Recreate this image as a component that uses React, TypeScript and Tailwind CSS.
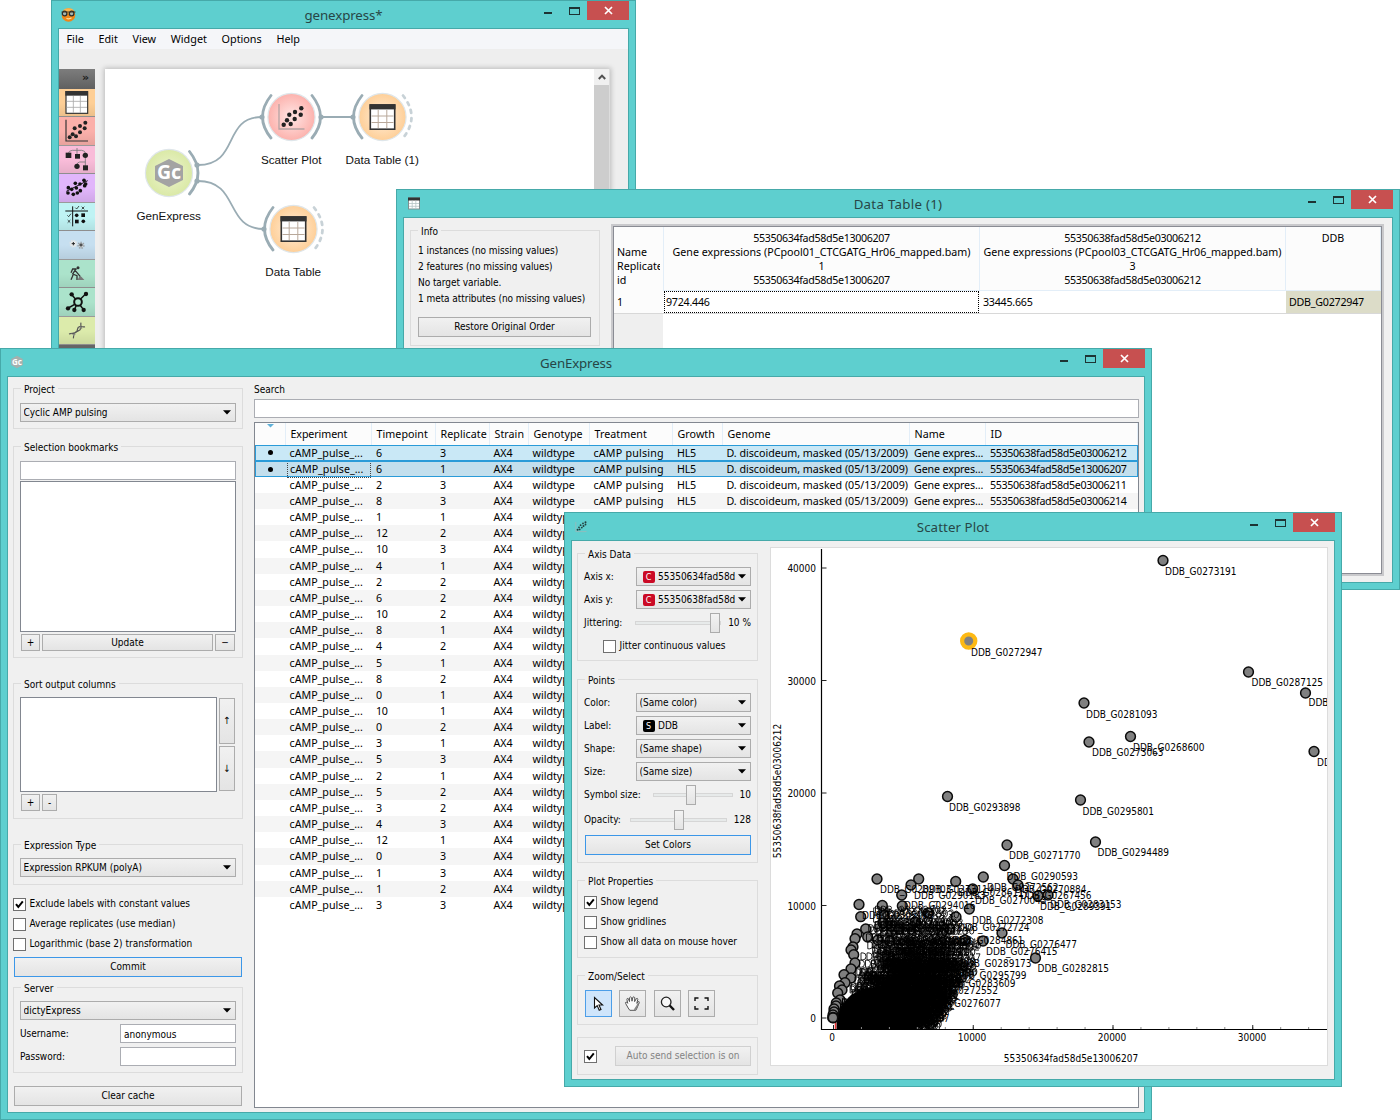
import React from "react";

const UI = "font-['DejaVu_Sans_Condensed','DejaVu_Sans',sans-serif] text-[10px] leading-4 text-black";
const SEGOE = "font-['Noto_Sans',sans-serif] text-[10.7px] text-black";

/* ---------- window chrome ---------- */

function WindowControls() {
  return (
    <div className="flex justify-end items-start mr-[6px]">
      <span className="w-2 h-0.5 bg-[#1d3434] mt-[11px] mr-[17px]" />
      <span className="w-[11px] h-2 border border-t-2 border-[#1d3434] mt-[6px] mr-[7px]" />
      <span className="w-[42px] h-[19px] bg-[#c75050] flex items-center justify-center">
        <svg width="9" height="9" viewBox="0 0 9 9" stroke="#fff" strokeWidth="1.7">
          <path d="M1 1L8 8M8 1L1 8" />
        </svg>
      </span>
    </div>
  );
}

function Win({
  frame,
  title,
  titleClass = "",
  icon,
  children,
}: {
  frame: string;
  title: string;
  titleClass?: string;
  icon: React.ReactNode;
  children: React.ReactNode;
}) {
  return (
    <section className={`absolute flex flex-col bg-[#5ecfcf] border border-[#46a9a9] ${frame}`}>
      <header className="h-[27px] shrink-0 grid grid-cols-[1fr_auto_1fr]">
        <div className="pl-2 pt-[6px]">{icon}</div>
        <h1 className={`font-['Noto_Sans',sans-serif] text-[13.3px] leading-[28px] text-[#274646] ${titleClass}`}>{title}</h1>
        <WindowControls />
      </header>
      <div className="flex-1 min-h-0 mx-[6px] mb-[6px] border border-[#46a9a9] bg-[#f0f0f0] overflow-hidden flex">
        {children}
      </div>
    </section>
  );
}

/* ---------- form controls ---------- */

function Group({ title, className, children }: { title?: string; className: string; children: React.ReactNode }) {
  return (
    <div className={`border border-[#dcdcdc] px-[6px] shrink-0 ${className}`}>
      {title && <div className="w-fit h-4 leading-[18px] -mt-2 ml-[1px] px-[3px] bg-[#f0f0f0] whitespace-nowrap">{title}</div>}
      {children}
    </div>
  );
}

function Button({ className, children }: { className: string; children?: React.ReactNode }) {
  return (
    <div
      className={`border bg-linear-to-b from-[#f1f1f1] to-[#e4e4e4] flex items-center justify-center whitespace-nowrap shrink-0 ${className}`}
    >
      {children}
    </div>
  );
}

function Combo({ className, children }: { className: string; children: React.ReactNode }) {
  return (
    <div
      className={`h-[19px] border border-[#acacac] bg-linear-to-b from-[#f1f1f1] to-[#e4e4e4] flex items-center pl-[2.5px] pr-1 ${className}`}
    >
      <div className="flex-1 min-w-0 overflow-hidden whitespace-nowrap flex items-center">{children}</div>
      <svg className="shrink-0 ml-[3px]" width="8" height="5" viewBox="0 0 8 5">
        <path d="M0 0.3H8L4 4.6Z" fill="#000" />
      </svg>
    </div>
  );
}

function Check({ on, className, children }: { on?: boolean; className?: string; children?: React.ReactNode }) {
  return (
    <div className={`flex items-center whitespace-nowrap ${className ?? ""}`}>
      <span className="w-[13px] h-[13px] border border-[#707070] bg-white mr-[3.5px] shrink-0">
        {on && (
          <svg width="11" height="11" viewBox="0 0 11 11" fill="none" stroke="#000" strokeWidth="2">
            <path d="M2 5.2L4.3 8L8.8 2.3" />
          </svg>
        )}
      </span>
      {children}
    </div>
  );
}

function Slider({ groove, before }: { groove: string; before: string }) {
  return (
    <div className={`h-5 ml-auto mr-[7px] flex items-center ${groove}`}>
      <span className={`h-1 border border-r-0 border-[#d6d6d6] bg-[#e7eaea] ${before}`} />
      <span className="w-[10px] h-5 shrink-0 border border-[#acacac] bg-linear-to-b from-[#f3f3f3] to-[#e4e4e4]" />
      <span className="h-1 flex-1 border border-l-0 border-[#d6d6d6] bg-[#e7eaea]" />
    </div>
  );
}

/* ---------- icons ---------- */

const OrangeIcon = () => (
  <svg width="17" height="16" viewBox="0 0 17 16">
    <circle cx="8.5" cy="8" r="6.8" fill="#ee861a" />
    <ellipse cx="8.5" cy="4" rx="5" ry="2.8" fill="#fbb550" />
    <circle cx="4.6" cy="6.5" r="2.3" fill="#a7b7b2" stroke="#2b3030" strokeWidth="1.3" />
    <circle cx="11.6" cy="6.5" r="2.3" fill="#a7b7b2" stroke="#2b3030" strokeWidth="1.3" />
    <path d="M1.5 5L15.5 5" stroke="#3a2a18" strokeWidth="0.9" fill="none" />
    <path d="M6.5 11.2Q9 12.6 11.5 10.8" stroke="#fde0a0" strokeWidth="1.2" fill="none" />
  </svg>
);

const SmallTable = () => (
  <svg width="12" height="13" viewBox="0 0 12 13" className="mt-[1px] ml-[3px]">
    <rect x="0.5" y="1" width="11" height="11" fill="#fff" stroke="#7f8f8f" />
    <rect x="0" y="0.5" width="12" height="3" fill="#333" />
    <path d="M4.2 3.5V12M7.8 3.5V12M1 6.5H11M1 9.3H11" stroke="#b5c5c5" strokeWidth="0.8" />
  </svg>
);

const SmallGc = () => (
  <svg width="14" height="14" viewBox="0 0 14 14" className="ml-px">
    <path d="M7 0.8L12.8 3.9V10.1L7 13.2L1.2 10.1V3.9Z" fill="#a5b0ae" />
    <text x="7" y="9.8" textAnchor="middle" fontFamily="Noto Sans" fontWeight="700" fontSize="8" fill="#fff">Gc</text>
  </svg>
);

const SmallScatter = () => (
  <svg width="12" height="12" viewBox="0 0 12 12" className="ml-[2px] mt-[2px]">
    <path d="M0.8 1V10.6H11.5" stroke="#8fbdbd" fill="none" />
    <g fill="#23403f">
      <circle cx="2.6" cy="8.7" r="1" /><circle cx="4.7" cy="8.4" r="0.9" /><circle cx="4" cy="6.3" r="0.9" />
      <circle cx="6.8" cy="6.6" r="0.9" /><circle cx="5.6" cy="4.2" r="0.9" /><circle cx="8.5" cy="5" r="1" />
      <circle cx="8" cy="2.4" r="0.9" /><circle cx="10.5" cy="3.5" r="0.9" /><circle cx="10.5" cy="1.2" r="1" />
    </g>
  </svg>
);

const dots = (pts: number[][], r: number) => pts.map(([x, y], i) => <circle key={i} cx={x} cy={y} r={r} />);

const TOOLS: { bg: string; art: React.ReactNode }[] = [
  {
    bg: "bg-[#fecf96]",
    art: (
      <>
        <rect x="21" y="8" width="65" height="65" fill="#fff" stroke="#333" strokeWidth="3.5" />
        <rect x="19" y="6" width="68" height="14" fill="#333" />
        <path d="M43 21V72M64 21V72M23 37H84M23 55H84" stroke="#aaa" strokeWidth="2.5" />
      </>
    ),
  },
  {
    bg: "bg-[#fbb0aa]",
    art: (
      <>
        <path d="M21 8V72H87" fill="none" stroke="#333" strokeWidth="3.5" />
        <g fill="#222">{dots([[32, 61], [41, 52], [51, 58], [47, 34], [63, 46], [63, 27], [77, 34], [79, 17]], 6)}</g>
      </>
    ),
  },
  {
    bg: "bg-[#f9bcd9]",
    art: (
      <>
        <path d="M54 6V24M28 22Q29 14 40 13H68Q79 14 79 22M79 34V60M54 56Q55 49 62 48H79" fill="none" stroke="#777" strokeWidth="2.5" />
        <g fill="#222">
          <rect x="20" y="20" width="17" height="16" /><rect x="48" y="24" width="15" height="14" /><circle cx="79" cy="28" r="8" />
          <circle cx="54" cy="61" r="8" /><rect x="72" y="58" width="15" height="15" />
        </g>
      </>
    ),
  },
  {
    bg: "bg-[#e1b6fb]",
    art: (
      <>
        <path d="M22 52L86 20" stroke="#111" strokeWidth="3" />
        <g fill="#111">{dots([[27, 57], [43, 61], [55, 57], [28, 41], [38, 46], [49, 28], [52, 42], [64, 50], [63, 30], [75, 19], [77, 35], [80, 30]], 5.5)}</g>
      </>
    ),
  },
  {
    bg: "bg-[#bff3f4]",
    art: (
      <>
        <path d="M41 10V70M19 24H87" stroke="#111" strokeWidth="3" />
        <path d="M49 14L53 18L60 9M68 11L76 19M76 11L68 19M25 37L29 41L36 32M26 51L34 59M34 51L26 59" fill="none" stroke="#111" strokeWidth="2.2" />
        <g fill="#111">
          <circle cx="53" cy="37" r="5.5" /><rect x="67" y="31" width="11" height="11" />
          <rect x="48" y="50" width="11" height="11" /><circle cx="73" cy="55" r="5.5" />
        </g>
      </>
    ),
  },
  {
    bg: "bg-[#c6dff0]",
    art: (
      <>
        <circle cx="43" cy="38" r="9" fill="#e9eef0" stroke="#dfe3e5" strokeWidth="6" strokeDasharray="4 3" />
        <circle cx="66" cy="43" r="8" fill="#d9dfe2" stroke="#9aa2a8" strokeWidth="6" strokeDasharray="4 3" />
        <path d="M38 38H48M43 33V43M61 42H71M66 37V47" stroke="#222" strokeWidth="3" />
      </>
    ),
  },
  {
    bg: "bg-[#abe3cb]",
    art: (
      <>
        <circle cx="57" cy="23" r="4.5" fill="#333" />
        <path d="M53 27L41 27L36 38M50 28L41 42L54 47V60M43 42L40 50L36 59M48 31L54 38L64 50" fill="none" stroke="#333" strokeWidth="4" />
        <path d="M56 60Q60 48 67 50L76 60Z" fill="#777" />
      </>
    ),
  },
  {
    bg: "bg-[#abe3cb]",
    art: (
      <>
        <path d="M50 34L39 21M64 34L79 19M47 49L28 60M52 52L47 64M63 51L73 64" stroke="#111" strokeWidth="4.5" />
        <circle cx="57" cy="42" r="11.5" fill="#abe3cb" stroke="#111" strokeWidth="6" />
        <g fill="#111">{dots([[38, 19], [81, 18], [27, 61], [46, 66], [74, 66]], 6.5)}</g>
      </>
    ),
  },
  {
    bg: "bg-[#dcebab]",
    art: (
      <>
        <path d="M30 51C40 48 47 50 52 45C58 39 52 31 62 29C68 28 73 31 78 29M43 64C45 56 42 50 50 45C57 41 64 42 66 34C67 28 64 24 66 17" fill="none" stroke="#555" strokeWidth="3.5" />
        <path d="M38 49L45 57M44 47L49 54M58 33L65 38M64 28L69 34" stroke="#888" strokeWidth="2" />
      </>
    ),
  },
];

function TableGlyph({ x, y }: { x: number; y: number }) {
  return (
    <g>
      <rect x={x - 12.2} y={y - 12} width="24.4" height="24.2" fill="#fff" stroke="#333" strokeWidth="1.6" />
      <rect x={x - 13} y={y - 12.8} width="26" height="5.2" fill="#333" />
      <path d={`M${x - 4.3} ${y - 7}V${y + 11}M${x + 4.3} ${y - 7}V${y + 11}M${x - 11} ${y - 1}H${x + 11}M${x - 11} ${y + 5.5}H${x + 11}`} stroke="#b8a89a" strokeWidth="1" />
    </g>
  );
}

/* ---------- workflow window ---------- */

function Node({ x, y, fill, label, children }: { x: number; y: number; fill: string; label: string; children: React.ReactNode }) {
  return (
    <g>
      <circle cx={x} cy={y} r="23.6" fill={fill} stroke="#dfe6ea" strokeWidth="1.2" />
      {children}
      <text x={x - 0.3} y={y + 46.5} textAnchor="middle" fontFamily="Liberation Sans" fontSize="11.7" fill="#111">{label}</text>
    </g>
  );
}

const arcL = (x: number, y: number) => `M${x - 20.5} ${y - 21.5}Q${x - 37.5} ${y} ${x - 20.5} ${y + 21}`;
const arcR = (x: number, y: number) => `M${x + 20.5} ${y - 21.5}Q${x + 37.5} ${y} ${x + 20.5} ${y + 21}`;

function WorkflowWindow() {
  return (
    <Win frame="left-[51px] top-0 w-[585px] h-[400px]" title="genexpress*" titleClass="tracking-[-0.1px]" icon={<OrangeIcon />}>
      <div className="flex-1 flex flex-col bg-[#eeeeee]">
        <nav className="h-[20px] bg-[#f5f6f9] flex gap-[14.7px] pl-[7.5px] pt-px items-center shrink-0 font-['Noto_Sans',sans-serif] text-[10.8px] text-black">
          {["File", "Edit", "View", "Widget", "Options", "Help"].map((m) => (
            <span key={m}>{m}</span>
          ))}
        </nav>
        <div className="flex flex-1 pt-[20px]">
          <aside className="w-[36px] shrink-0 bg-[#666]">
            <div className="h-[19.5px] bg-linear-to-b from-[#7d7d7d] to-[#606060] text-right pr-[6px] leading-[18px] font-['DejaVu_Sans',sans-serif] font-bold text-[11px] text-[#1c1c1c]">»</div>
            {TOOLS.map((t, i) => (
              <div key={i} className={`h-[28.5px] border-b border-[#9a9a9a] ${t.bg}`}>
                <svg width="36" height="28" viewBox="0 0 108 84" className="block bg-linear-to-b from-transparent from-50% to-black/8">{t.art}</svg>
              </div>
            ))}
          </aside>
          <div className="ml-[10px] w-[505px] bg-white flex shadow-[0_0_5px_1px_rgba(0,0,0,0.22)]">
            <svg width="489" height="290" viewBox="105 69 489 290" className="shrink-0">
              <defs>
                <radialGradient id="gRed"><stop offset="0.2" stopColor="#ffdcda" /><stop offset="1" stopColor="#fcb2ad" /></radialGradient>
                <radialGradient id="gOrg"><stop offset="0.2" stopColor="#ffe8cd" /><stop offset="1" stopColor="#fecf98" /></radialGradient>
                <radialGradient id="gGrn"><stop offset="0.2" stopColor="#e9f2c8" /><stop offset="1" stopColor="#dae9a6" /></radialGradient>
              </defs>
              <g fill="none" stroke="#9aacb4" strokeWidth="1.8">
                <path d="M198 165C240 165 222 117 262 117M198 181C240 181 224 229 264 229M321 117H353" />
              </g>
              <g fill="#9aacb4">{dots([[197, 165], [197, 181], [262, 117], [264, 229], [321, 117], [353, 117]], 2.6)}</g>
              <g fill="none" stroke="#9aacb4" strokeWidth="2.8" strokeLinecap="round">
                <path d={arcL(291.5, 117) + arcR(291.5, 117) + arcL(382.5, 117) + arcR(169, 173) + arcL(293.5, 229)} />
                <path d={arcR(382.5, 117) + arcR(293.5, 229)} stroke="#c8d2d7" strokeDasharray="3 5.2" />
              </g>
              <Node x={291.5} y={117} fill="url(#gRed)" label="Scatter Plot">
                <path d="M279 104V129H304.5" stroke="#b5a3a3" strokeWidth="1.3" fill="none" />
                <g fill="#222">{dots([[283.7, 124.7], [287, 120.3], [290.7, 124], [289.3, 114.7], [294.7, 119], [295, 112], [300.7, 114.7], [301.3, 108.3]], 2.2)}</g>
              </Node>
              <Node x={382.5} y={117} fill="url(#gOrg)" label="Data Table (1)"><TableGlyph x={382.5} y={117} /></Node>
              <Node x={169} y={173} fill="url(#gGrn)" label="GenExpress">
                <path d="M169 159L183 166V180L169 187L155 180V166Z" fill="#a3a3a3" />
                <text x="169" y="179.3" textAnchor="middle" fontFamily="Noto Sans" fontWeight="700" fontSize="19.5" fill="#fff">Gc</text>
              </Node>
              <Node x={293.5} y={229} fill="url(#gOrg)" label="Data Table"><TableGlyph x={293.5} y={229} /></Node>
            </svg>
            <div className="flex-1 bg-[#cdcdcd] border-r border-[#ddd]">
              <div className="h-4 bg-[#f0f0f0] flex items-center justify-center">
                <svg width="8" height="6" viewBox="0 0 8 6"><path d="M0.8 5L4 1.6L7.2 5" stroke="#505050" strokeWidth="2" fill="none" /></svg>
              </div>
            </div>
          </div>
        </div>
      </div>
    </Win>
  );
}

/* ---------- data table window ---------- */

function DataTableWindow() {
  const head = "flex flex-col text-center leading-[14.3px] pt-[3.5px] border-r border-b border-[#e3eef8] whitespace-nowrap overflow-hidden";
  return (
    <Win frame="left-[396px] top-[189px] w-[1004px] h-[401px]" title="Data Table (1)" titleClass="tracking-[0.28px]" icon={<SmallTable />}>
      <div className={`w-[190px] shrink-0 ml-[6px] pt-3 ${UI}`}>
        <Group title="Info" className="h-[116px]">
          <div className="pl-[1px] pt-[4px] whitespace-nowrap tracking-[-0.06px]">
            <p>1 instances (no missing values)</p>
            <p>2 features (no missing values)</p>
            <p>No target variable.</p>
            <p>1 meta attributes (no missing values)</p>
          </div>
          <Button className="h-5 ml-[1px] w-[173px] mt-[10px] border-[#acacac]">Restore Original Order</Button>
        </Group>
      </div>
      <div className={`ml-[11px] mt-[6px] mb-[6px] w-[773px] border-2 border-[#c9c9cc] shrink-0 ${SEGOE}`}>
        <div className="h-full border border-[#8a8c94] bg-white flex flex-col">
          <div className="grid grid-cols-[49px_317px_306px_1fr] h-[64px] bg-[#fcfcfc] shrink-0">
            <div className="leading-[14.3px] pt-[17.5px] pl-[3px] mr-[3px] overflow-hidden whitespace-nowrap">
              Name<br />Replicate<br />id
            </div>
            <div className={`border-l ${head}`}>
              <span className="tracking-[-0.35px]">55350634fad58d5e13006207</span><span>Gene expressions (PCpool01_CTCGATG_Hr06_mapped.bam)</span><span>1</span><span className="tracking-[-0.35px]">55350634fad58d5e13006207</span>
            </div>
            <div className={head}>
              <span className="tracking-[-0.35px]">55350638fad58d5e03006212</span><span>Gene expressions (PCpool03_CTCGATG_Hr06_mapped.bam)</span><span>3</span><span className="tracking-[-0.35px]">55350638fad58d5e03006212</span>
            </div>
            <div className={head}><span>DDB</span></div>
          </div>
          <div className="grid grid-cols-[49px_317px_306px_1fr] h-[23px] border-b border-[#d8d8d8] items-center shrink-0 leading-[22px] tracking-[-0.25px]">
            <span className="pl-[3px] bg-[#fcfcfc]">1</span>
            <span className="pl-[1px] ml-[1px] mr-[1px] h-[22px] leading-5 border border-dotted border-black">9724.446</span>
            <span className="pl-[3px]">33445.665</span>
            <span className="pl-[3px] bg-[#dcdcc8]">DDB_G0272947</span>
          </div>
          <div className="flex-1 w-[49px] bg-[#efefef]" />
        </div>
      </div>
    </Win>
  );
}

/* ---------- GenExpress window ---------- */

const COLS = "grid grid-cols-[31px_86px_64px_54px_39px_61px_83px_50px_187px_76px_1fr]";
const HEADS = ["Experiment", "Timepoint", "Replicate", "Strain", "Genotype", "Treatment", "Growth", "Genome", "Name", "ID"];
const ROWS: [number, number][] = [
  [6, 3], [6, 1], [2, 3], [8, 3], [1, 1], [12, 2], [10, 3], [4, 1], [2, 2], [6, 2], [10, 2], [8, 1], [4, 2], [5, 1], [8, 2],
  [0, 1], [10, 1], [0, 2], [3, 1], [5, 3], [2, 1], [5, 2], [3, 2], [4, 3], [12, 1], [0, 3], [1, 3], [1, 2], [3, 3],
];
const IDS = ["55350638fad58d5e03006212", "55350634fad58d5e13006207", "55350638fad58d5e03006211", "55350638fad58d5e03006214"];

function ExperimentRow({ i }: { i: number }) {
  const [time, rep] = ROWS[i];
  const selected = i < 2;
  const bg = i === 0 ? "bg-[#c9e8f6]" : i === 1 ? "bg-[#c3dfed]" : i % 2 ? "bg-[#f5f5f5]" : "bg-white";
  return (
    <div className={`${COLS} h-[16.17px] leading-[16px] whitespace-nowrap ${bg} ${selected ? "outline outline-1 -outline-offset-1 outline-[#2a9bd8]" : ""}`}>
      <span className="flex items-center justify-center">{selected && <i className="w-[5px] h-[5px] rounded-full bg-black" />}</span>
      <span className={i === 1 ? "pl-[2px] ml-[1px] mr-[1px] leading-[15px] border border-dotted border-[#444]" : "pl-[3.5px]"}>cAMP_pulse_...</span>
      <span className="pl-[4px] tracking-[-0.3px]">{time}</span>
      <span className="pl-[4px]">{rep}</span>
      <span className="pl-[3.5px] tracking-[-0.1px]">AX4</span>
      <span className="pl-[3.5px]">wildtype</span>
      {i < 4 && (
        <>
          <span className="pl-[3.5px] tracking-[0.2px]">cAMP pulsing</span>
          <span className="pl-[4px] tracking-[-0.2px]">HL5</span>
          <span className="pl-[3.5px] tracking-[-0.02px]">D. discoideum, masked (05/13/2009)</span>
          <span className="pl-[4px] tracking-[-0.15px]">Gene expres...</span>
          <span className="pl-[4px] tracking-[-0.35px]">{IDS[i]}</span>
        </>
      )}
    </div>
  );
}

function GenExpressWindow() {
  const gray = "border-[#acacac]";
  return (
    <Win frame="left-0 top-[348px] w-[1152px] h-[772px]" title="GenExpress" titleClass="tracking-[-0.15px]" icon={<SmallGc />}>
      <div className={`w-[230px] ml-[5px] shrink-0 flex flex-col ${UI}`}>
        <Group title="Project" className="mt-[11px] h-[41px]">
          <Combo className="mt-[6px]">Cyclic AMP pulsing</Combo>
        </Group>
        <Group title="Selection bookmarks" className="mt-[17px] h-[212px]">
          <div className="mt-[6px] h-[19px] border border-[#abadb3] bg-white" />
          <div className="mt-[1px] h-[151px] border border-[#828790] bg-white" />
          <div className="mt-[2px] flex gap-[2px] px-[1px]">
            <Button className={`w-[19px] h-[17px] ${gray}`}>+</Button>
            <Button className={`w-[171px] h-[17px] ${gray}`}>Update</Button>
            <Button className={`flex-1 h-[17px] ${gray}`}>−</Button>
          </div>
        </Group>
        <Group title="Sort output columns" className="mt-[25px] h-[136px]">
          <div className="flex mt-[5px]">
            <div className="w-[197px] h-[95px] border border-[#828790] bg-white" />
            <div className="ml-[2px] mt-px flex flex-col gap-[2px]">
              <Button className={`w-[16px] h-[46px] ${gray}`}>↑</Button>
              <Button className={`w-[16px] h-[45px] ${gray}`}>↓</Button>
            </div>
          </div>
          <div className="mt-[2px] ml-[1px] flex gap-[2px]">
            <Button className={`w-[19px] h-[17px] ${gray}`}>+</Button>
            <Button className={`w-[15px] h-[17px] ${gray}`}>-</Button>
          </div>
        </Group>
        <Group title="Expression Type" className="mt-[25px] h-[41px]">
          <Combo className="mt-[5px]">Expression RPKUM (polyA)</Combo>
        </Group>
        <div className="flex flex-col gap-1 mt-[11px]">
          <Check on>Exclude labels with constant values</Check>
          <Check>Average replicates (use median)</Check>
          <Check>Logarithmic (base 2) transformation</Check>
        </div>
        <Button className="h-5 mt-[5px] mx-[1px] border-[#3c97e8]">Commit</Button>
        <Group title="Server" className="mt-[10px] h-[86px]">
          <Combo className="mt-[5px]">dictyExpress</Combo>
          <div className="flex items-center justify-between mt-[4px]">
            Username:
            <span className="w-[116px] h-[19px] border border-[#abadb3] bg-white pl-[3px] leading-[19px]">anonymous</span>
          </div>
          <div className="flex items-center justify-between mt-[4px]">
            Password:
            <span className="w-[116px] h-[19px] border border-[#abadb3] bg-white" />
          </div>
        </Group>
        <Button className={`h-5 mt-[13px] mx-[1px] ${gray}`}>Clear cache</Button>
      </div>
      <div className="ml-[11px] w-[885px] shrink-0 flex flex-col">
        <div className={`mt-[4px] h-4 ${UI} leading-[18px]`}>Search</div>
        <div className="mt-[2px] h-[19px] border border-[#abadb3] bg-white shrink-0" />
        <div className={`mt-[4px] h-[686px] border border-[#828790] bg-white ${SEGOE}`}>
          <div className={`${COLS} h-[21.5px] bg-[#fcfcfc]`}>
            <span className="border-r border-[#e3eef8] flex justify-center">
              <svg width="7" height="4" viewBox="0 0 7 4" className="mt-px"><path d="M0 0H7L3.5 3.6Z" fill="#5fb0d8" /></svg>
            </span>
            {HEADS.map((h, k) => (
              <span key={h} className={`pl-[4.5px] leading-[22px] border-r border-[#e3eef8] ${k === 0 ? "tracking-[-0.1px]" : "tracking-[0.05px]"}`}>{h}</span>
            ))}
          </div>
          {ROWS.map((_, i) => <ExperimentRow key={i} i={i} />)}
        </div>
      </div>
    </Win>
  );
}

/* ---------- scatter plot window ---------- */

const POINTS: [number, number][] = [
  [1163, 560.5], [1248.5, 672], [1305.5, 693], [1314, 751.5], [1084, 703], [1130.5, 736.5], [1089, 742], [1080.5, 800], [1095.5, 842],
  [947.5, 796.5], [1007, 845], [1004.5, 865.5], [1035.5, 958], [1013, 879], [1018, 885], [1038, 896], [1048, 895], [877, 879],
  [918.7, 879], [911, 885], [901.7, 895], [955.7, 881.5], [983.3, 877], [859, 904.5], [882.3, 905.5], [902.3, 906], [969.3, 909],
  [860.7, 916.7], [884, 915.7], [972.7, 889], [928, 913], [956, 917], [1002, 933], [865.7, 929], [867.7, 937], [857, 934], [855, 938.7],
  [878, 940], [889.7, 941], [890.7, 926], [899, 929], [883, 923], [941.7, 933], [950, 929], [915, 922], [965, 940], [983, 941], [853, 947], [851, 950], [853.7, 954.7],
  [855, 963], [851, 969], [844, 974.7], [851, 978], [845, 982.7], [839.5, 986], [842, 990], [837.7, 993], [840, 1000], [836.3, 1003], [836, 1006], [834, 1009],
  [834, 1012], [833, 1015], [833, 1017.7],
];

const LABELS: [number, number, string][] = [
  [1165, 571.5, "DDB_G0273191"], [971, 652, "DDB_G0272947"], [1251.5, 682.5, "DDB_G0287125"], [1308.5, 702.5, "DDB_G0284127"],
  [1317, 762, "DDB_G0269160"], [1086, 714, "DDB_G0281093"], [1133, 747, "DDB_G0268600"], [1092, 752.5, "DDB_G0273063"],
  [1082.5, 811, "DDB_G0295801"], [1097.5, 852.5, "DDB_G0294489"], [949, 807, "DDB_G0293898"], [1009, 855.5, "DDB_G0271770"],
  [1006.5, 876, "DDB_G0290593"], [1037.5, 968.5, "DDB_G0282815"], [987, 887.5, "DDB_G0272562"], [1015, 889, "DDB_G0270884"],
  [1020, 895, "DDB_G0267456"], [1050, 904.5, "DDB_G0283153"], [1040, 906.5, "DDB_G0289391"], [975, 900, "DDB_G0270043"],
  [972, 920, "DDB_G0272308"], [958, 927, "DDB_G0272724"], [1005.5, 944, "DDB_G0276477"], [986, 951, "DDB_G0276415"],
  [960, 963.5, "DDB_G0289173"], [955, 975, "DDB_G0295799"], [944, 983.5, "DDB_G0283609"], [926.5, 990.5, "DDB_G0272552"],
  [929.5, 1003, "DDB_G0276077"], [878, 1018.5, "DDB_G0280097"], [904, 905, "DDB_G0294016"], [914, 895.5, "DDB_G0290183"],
  [880, 889, "DDB_G0289303"], [922, 889.5, "DDB_G0273114"], [958, 892, "DDB_G0286117"], [862, 915.5, "DDB_G0305183"], [952, 940, "DDB_G0284861"],
];

/* Dense cloud of overlapping labels near the origin, drawn as one stroke texture. */
function cloudPath(): string {
  let seed = 7;
  const rnd = () => {
    seed = (seed * 16807) % 2147483647;
    return seed / 2147483647;
  };
  const edge: [number, number, number][] = [
    [905, 864, 895], [928, 864, 905], [950, 862, 912], [970, 856, 908], [990, 846, 895], [1005, 840, 884], [1032, 838, 866],
  ];
  const bounds = (y: number) => {
    const k = Math.max(1, edge.findIndex((e) => y <= e[0]));
    const [y0, l0, r0] = edge[k - 1];
    const [y1, l1, r1] = edge[k];
    const f = (y - y0) / (y1 - y0);
    return [l0 + (l1 - l0) * f, r0 + (r1 - r0) * f];
  };
  let d = "";
  for (let n = 0; n < 340; n++) {
    const y = Math.round(908 + 120 * Math.pow(rnd(), 0.55)) + rnd() * 0.8;
    const [left, right] = bounds(y);
    const x = left + (right - left) * Math.pow(rnd(), 0.85);
    for (let c = 0; c < 12; c++) {
      const gx = x + c * 6;
      const t = y - 3.5;
      const r = rnd();
      if (c === 3) d += `M${gx - 0.5} ${t + 9}h6`;
      else if (c < 2) d += `M${gx} ${t}v7h2q3 0 3 -3.5t-3 -3.5h-2`;
      else if (c === 2) d += `M${gx} ${t}v7h2q2.5 0 2.5 -2t-4 -1.7M${gx} ${t}h2q2 0 2 1.6t-2 1.7`;
      else if (r < 0.35) d += `M${gx} ${t + 3.5}q0 -3.5 2.2 -3.5t2.2 3.5t-2.2 3.5t-2.2 -3.5`;
      else if (r < 0.6) d += `M${gx} ${t + 1}q4 -2.5 4 1q0 1.5 -4 5h4.3`;
      else if (r < 0.8) d += `M${gx} ${t + 0.5}q4 -1.5 4 1.4t-2.5 1.4q3 0 3 2t-4.3 1.6`;
      else if (r < 0.92) d += `M${gx + 0.4} ${t}h4l-2.8 7`;
      else d += `M${gx + 1} ${t + 1}l1.5 -1v7`;
    }
  }
  return d.replace(/(\d+\.\d)\d+/g, "$1");
}
const CLOUD = cloudPath();

function ScatterChart() {
  const ys = [0, 10000, 20000, 30000, 40000];
  const xs = [0, 10000, 20000, 30000];
  const minor = Array.from({ length: 18 }, (_, k) => 833.5 + k * 27.95);
  return (
    <svg width="556" height="517" viewBox="771 548 556 517" className="block" fontFamily="DejaVu Sans Condensed, DejaVu Sans" fontSize="10">
      <clipPath id="plotArea"><rect x="822" y="548" width="505" height="481" /></clipPath>
      <g clipPath="url(#plotArea)">
        <path d="M836.5 1030V1016L843 1003L852 994L866 989L888 985L915 986L930 992L929 1002L926 1012L921 1022L917 1030Z" fill="#000" />
      </g>
      <path d="M835.5 1020V1029" stroke="#e33" strokeWidth="1.5" />
      <g fill="#808080" stroke="#0b0b0b" strokeWidth="1.5">
        {POINTS.map(([x, y], i) => <circle key={i} cx={x} cy={y} r="4.9" />)}
        <circle cx="833" cy="1017.7" r="4.9" strokeWidth="2" />
      </g>
      <circle cx="968.7" cy="641" r="6.6" fill="#808080" stroke="#fdb913" strokeWidth="4.2" />
      <g clipPath="url(#plotArea)">
        <path d={CLOUD} fill="none" stroke="#000" strokeWidth="0.85" />
        <g fill="#000">
          {LABELS.map(([x, y, t]) => (
            <text key={t} x={x} y={y + 3.7}>{t}</text>
          ))}
        </g>
      </g>
      <path d="M821.5 549V1029.5H1327" fill="none" stroke="#000" strokeWidth="1.2" />
      <path d={minor.map((x) => `M${x} 1027V1029`).join("")} stroke="#888" strokeWidth="1" />
      <g textAnchor="end" fill="#000">
        {ys.map((v, k) => (
          <g key={v}>
            <path d={`M821.5 ${1018 - k * 112.5}h5`} stroke="#222" />
            <text x="816" y={1022 - k * 112.5}>{v}</text>
          </g>
        ))}
      </g>
      <g textAnchor="middle" fill="#000">
        {xs.map((v, k) => (
          <g key={v}>
            <path d={`M${833.5 + k * 139.75} 1025v4`} stroke="#222" />
            <text x={832 + k * 140} y="1040.5">{v}</text>
          </g>
        ))}
        <text x="1071" y="1062">55350634fad58d5e13006207</text>
        <text transform="translate(781 791) rotate(-90)">55350638fad58d5e03006212</text>
      </g>
    </svg>
  );
}

function Badge({ color, children }: { color: string; children: string }) {
  return (
    <span className={`w-3 h-3 rounded-[2px] ml-[3px] mr-[3.5px] text-white text-[9px] leading-3 text-center shrink-0 ${color}`}>{children}</span>
  );
}

function ComboRow({ label, children }: { label: string; children: React.ReactNode }) {
  return (
    <div className="flex items-center justify-between h-[19px]">
      <span>{label}</span>
      <Combo className="w-[115px]">{children}</Combo>
    </div>
  );
}

function ScatterWindow() {
  const tool = "w-[27px] h-[27px]";
  return (
    <Win frame="left-[564px] top-[512px] w-[778px] h-[575px]" title="Scatter Plot" titleClass="tracking-[0.08px]" icon={<SmallScatter />}>
      <div className={`w-[181px] ml-[5px] shrink-0 flex flex-col ${UI}`}>
        <Group title="Axis Data" className="mt-[12px] h-[108px]">
          <div className="mt-[5px] flex flex-col gap-[4px]">
            <ComboRow label="Axis x:"><Badge color="bg-[#cb0a25]">C</Badge>55350634fad58d5e13006207</ComboRow>
            <ComboRow label="Axis y:"><Badge color="bg-[#cb0a25]">C</Badge>55350638fad58d5e03006212</ComboRow>
          </div>
          <div className="flex items-center mt-[4px]">
            Jittering:<Slider groove="w-[86px]" before="w-[76px]" />10 %
          </div>
          <Check className="mt-[5px] ml-[19px]">Jitter continuous values</Check>
        </Group>
        <Group title="Points" className="mt-[18px] h-[184px]">
          <div className="mt-[5px] flex flex-col gap-[4px]">
            <ComboRow label="Color:">(Same color)</ComboRow>
            <ComboRow label="Label:"><Badge color="bg-black">S</Badge>DDB</ComboRow>
            <ComboRow label="Shape:">(Same shape)</ComboRow>
            <ComboRow label="Size:">(Same size)</ComboRow>
          </div>
          <div className="flex items-center mt-[4px]">
            Symbol size:<Slider groove="w-[80px]" before="w-[33px]" />10
          </div>
          <div className="flex items-center mt-[5px]">
            Opacity:<Slider groove="w-[97px]" before="w-[44px]" />128
          </div>
          <Button className="h-5 mt-[5px] ml-[1px] border-[#3c97e8]">Set Colors</Button>
        </Group>
        <Group title="Plot Properties" className="mt-[17px] h-[78px]">
          <div className="flex flex-col gap-1 mt-[5px]">
            <Check on>Show legend</Check>
            <Check>Show gridlines</Check>
            <Check>Show all data on mouse hover</Check>
          </div>
        </Group>
        <Group title="Zoom/Select" className="mt-[17px] h-[50px]">
          <div className="flex gap-[7.3px] mt-[6px] ml-[1px]">
            <div className={`${tool} border border-[#4c9ee8] bg-[#cfe5fb] flex items-center justify-center`}>
              <svg width="11" height="16" viewBox="0 0 11 16"><path d="M1.5 1.5V12L4.2 9.6L6.2 14.2L8 13.4L6 9H9.6Z" fill="#fff" stroke="#111" strokeWidth="1.1" /></svg>
            </div>
            <Button className={`${tool} border-[#acacac]`}>
              <svg width="17" height="17" viewBox="0 0 17 17">
                <path d="M4.2 13L1.8 8.8Q1 7.2 2 7Q2.8 6.9 3.7 8.3L2.9 4.3Q3 2.9 4.3 3.6L5.5 6.6L5.6 2.6Q6.5 1.2 7.5 2.6L8 6.2L8.8 2.3Q10 1.1 10.8 2.7L10.6 6.6L12.3 3.6Q13.7 2.9 13.8 4.4L12.8 8.3L14.2 6.6Q15.6 6.4 15.2 7.8L13 13L11.8 15.3H5.8Z" fill="#fafafa" stroke="#555" strokeWidth="1" />
                <path d="M10.5 15L12.8 11.5L14.5 8" stroke="#888" strokeWidth="1.6" fill="none" />
              </svg>
            </Button>
            <Button className={`${tool} border-[#acacac]`}>
              <svg width="17" height="17" viewBox="0 0 17 17"><circle cx="7.2" cy="7" r="4.8" fill="#f8f8f8" stroke="#222" strokeWidth="1.3" /><path d="M10.7 10.5L15 15" stroke="#111" strokeWidth="2.4" /></svg>
            </Button>
            <Button className={`${tool} border-[#acacac]`}>
              <svg width="15" height="13" viewBox="0 0 15 13" fill="none" stroke="#111" strokeWidth="1.4"><path d="M1 4V1H4.5M10.5 1H14V4M14 9V12H10.5M4.5 12H1V9" /></svg>
            </Button>
          </div>
        </Group>
        <Group className="mt-[12px] h-[38px] flex items-center">
          <Check on />
          <Button className="w-[136px] h-5 ml-auto border-[#d0d0d0] text-[#838383]">Auto send selection is on</Button>
        </Group>
      </div>
      <div className="ml-[12px] mt-[6px] w-[558px] h-[519px] border border-[#dcdcdc] bg-white shrink-0 overflow-hidden">
        <ScatterChart />
      </div>
    </Win>
  );
}

export default function App() {
  return (
    <main className="relative w-[1400px] h-[1120px] bg-white overflow-hidden">
      <WorkflowWindow />
      <DataTableWindow />
      <GenExpressWindow />
      <ScatterWindow />
    </main>
  );
}
